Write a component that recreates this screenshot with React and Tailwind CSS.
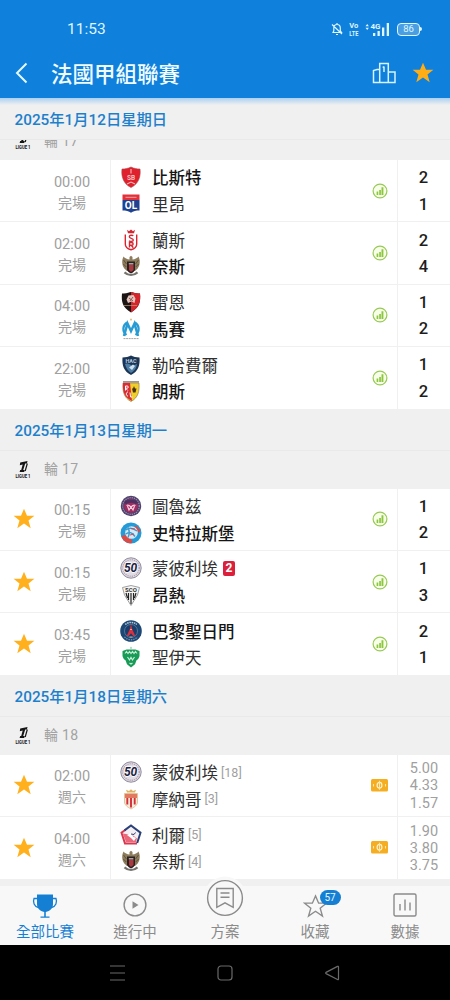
import clsx from 'clsx';

const STAR = 'M12 1.8l3 7h7.4l-5.9 4.8 2.2 7.6-6.7-4.6-6.7 4.6 2.2-7.6L1.6 8.8H9z';

const crests = {
  brest: (
    <>
      <path d="M11 1c3 1.500 6 2 9 2 1 7.500-1.500 15-9 18.500C3.500 18 1 10.500 2 3c3 0 6-.5 9-2z" fill="#e0202c" stroke="#a84448" strokeWidth=".6" />
      <path d="M11 3v4.500M7 18l4-2 4 2" stroke="#f6b9bb" strokeWidth="1.100" fill="none" />
      <text x="11" y="14" fontSize="6.500" fontWeight="700" textAnchor="middle" fill="#f9c4c6">SB</text>
    </>
  ),
  lyon: (
    <>
      <path d="M2.500 1.500h17V7h-17z" fill="#e3313a" />
      <path d="M5.500 4.300h11" stroke="#f5a2a5" />
      <path d="M2.500 7h17v10.500c-3.300 0-6.500.5-8.500 2.200-2-1.700-5.200-2.200-8.500-2.200z" fill="#1f4191" />
      <text x="11" y="16" fontSize="10" fontWeight="700" textAnchor="middle" fill="#fff">OL</text>
    </>
  ),
  reims: (
    <>
      <path d="M7 .8l2 1.400L11 .4l2 1.800L15 .8l-1 3.400H8z" fill="#d92530" />
      <path d="M5.300 5.500v9.500c0 3 2.700 5 5.700 5.800 3-.8 5.700-2.800 5.700-5.800V5.500" fill="#fff" stroke="#d92530" strokeWidth="1.400" />
      <path d="M13.300 6.800c-1-.8-4-.9-4 1 0 1.800 4 1.200 4 3.200 0 1.700-3 1.700-4.300.7M9.500 18.500v-5h2c2.200 0 2.200 2.800 0 2.800h-2M11.300 16.300l2 2.500" fill="none" stroke="#d92530" strokeWidth="1.400" />
    </>
  ),
  nice: (
    <>
      <path d="M9.500 2l1.500-1.200L12.500 2v2.500C15 4.300 17 3.200 18.500 1.500c1.800 3.500 1.800 8.500-.8 12L15 16H7l-2.700-2.500c-2.600-3.500-2.600-8.500-.8-12C5 3.200 7 4.300 9.500 4.500z" fill="#8d7c5c" />
      <path d="M3.500 5l3 4M18.500 5l-3 4M3.300 9l3 3M18.700 9l-3 3" stroke="#5d4e35" strokeWidth=".9" />
      <path d="M7 6.500h8v7.800c0 2-2 3.200-4 4.200-2-1-4-2.200-4-4.200z" fill="#2a2020" />
      <path d="M9 9.500h4.500V15L11 17l-2-2z" fill="#a83a42" />
      <path d="M8.800 8.800h4.600" stroke="#ddd" />
      <path d="M4.500 17.300c4 3.500 9 3.500 13 0" stroke="#77736e" strokeWidth="2.200" fill="none" />
    </>
  ),
  rennes: (
    <>
      <path d="M2 2.500C7 3 9 1 11 1s4 2 9 1.500c.8 8-.5 14-9 19C2.500 16.500 1.200 10.500 2 2.500z" fill="#1c1515" />
      <path d="M11 1c2 0 4 2 9 1.500.8 8-.5 14-9 19z" fill="#d4252c" />
      <path d="M6.500 8.500l2-4 5-.5 2 3.500-1 4.500-3-1.500-3.500 1.500z" fill="#e3c4bc" />
      <path d="M9 7l4 3M13 6l-3 4" stroke="#7a3a3a" strokeWidth=".8" />
      <path d="M4 14.500h13" stroke="#b97" strokeWidth=".7" />
    </>
  ),
  marseille: (
    <>
      <path d="M11 .3l.8 1.300-.8 1.300-.8-1.300z" fill="#cfa65a" />
      <path d="M6.500 17C2 13.500 2.500 7.500 7 4.500M15.500 17c4.500-3.500 4-9.500-.5-12.500" stroke="#279bd3" strokeWidth="2.200" fill="none" />
      <path d="M4 18L7.500 5.500 11 13l3.500-7.500L18 18" stroke="#279bd3" strokeWidth="2.500" fill="none" />
      <path d="M3.500 20.600h15" stroke="#a5a5a5" strokeWidth="1" strokeDasharray="2 .6" />
    </>
  ),
  lehavre: (
    <>
      <path d="M2.500 3.500c3 0 6.500-.7 8.500-2 2 1.300 5.500 2 8.500 2 .7 8-1.500 14-8.500 17.500C4 17.500 1.800 11.500 2.500 3.500z" fill="#1c3554" />
      <path d="M5 10c3-1 5 0 7 2l5-2c-.5 4-2.500 7-6 9-3-2-5-5-6-9z" fill="#4e7ea5" />
      <path d="M9 13.500l4-3 2 1.500-3 4z" fill="#cfe0ee" />
      <text x="11" y="8.500" fontSize="5.500" fontWeight="700" textAnchor="middle" fill="#b8cbe0">HAC</text>
    </>
  ),
  lens: (
    <>
      <path d="M3 3h16c.5 8-.5 14.500-8 18.500C3.500 17.500 2.500 11 3 3z" fill="#f0cf2b" stroke="#8b6b4b" strokeWidth=".6" />
      <path d="M3 3h7l2 18c-8-3.500-9.500-10-9-18z" fill="#d92c35" />
      <path d="M3 1.900h16" stroke="#7e746a" strokeWidth="1.300" />
      <path d="M14 6l1 2.500h1.500l-1 4h-2.500l-1-4h1z" fill="#47330f" />
      <path d="M5.500 10.500V6h1.700c1.500 0 1.500 2.200 0 2.200H5.500l2.300 2.300M8 12c-2.200 0-2.200 4 0 4M10 12.500l.6 4.500h1.800" stroke="#fff" strokeWidth="1" fill="none" />
    </>
  ),
  toulouse: (
    <>
      <circle cx="11" cy="11" r="10.200" fill="#50406b" />
      <circle cx="11" cy="11" r="8.300" fill="none" stroke="#9b8aae" strokeWidth="1.300" strokeDasharray="1.200 1" />
      <circle cx="11" cy="11" r="6.800" fill="#a32a60" />
      <path d="M5 8.200c3-2.500 9-2.500 12 0" stroke="#4b3161" strokeWidth="3" fill="none" />
      <path d="M6.500 10.500c2-1 3 0 4.500 1.500 1.500-1.500 2.500-2.500 4.500-1.500M7.500 11l1.500 4 2-3 2 3 1.500-4" stroke="#f3cfe0" strokeWidth="1.200" fill="none" />
    </>
  ),
  strasbourg: (
    <>
      <circle cx="11" cy="11" r="10.500" fill="#249ad6" />
      <path d="M1.500 14l4-1 7 5.500-1 2.800C6.500 21.500 2.500 18.500 1.500 14zM16 3.500l4.500 5-2.500 2.500-4-5z" fill="#dc4a45" />
      <circle cx="11.500" cy="10.500" r="6.300" fill="#d5eaf6" />
      <path d="M6 8c3-2.500 7-2 11 1M6 12c3-2.500 6-2 9 2.500M8 5.500c1.500 3 1.500 7 0 10" stroke="#3c9ace" strokeWidth="1.500" fill="none" />
      <path d="M11 6.500l4 .5M10 13l4-1" stroke="#d34b50" strokeWidth="1" />
    </>
  ),
  montpellier: (
    <>
      <circle cx="11" cy="11" r="10.200" fill="#dfdce5" stroke="#8f8b9f" strokeWidth="1" />
      <circle cx="11" cy="11" r="8.300" fill="none" stroke="#b9a4ae" strokeWidth="1.400" strokeDasharray="1.200 1" />
      <text x="10.600" y="15.300" fontSize="12" fontWeight="700" fontStyle="italic" textAnchor="middle" fill="#1b2140" stroke="#fff" strokeWidth="1.400" paintOrder="stroke">50</text>
    </>
  ),
  angers: (
    <>
      <path d="M2.500 3.500L11 1.500l8.500 2-2 7.500L11 21.500 4.500 11z" fill="#f7f7f7" stroke="#888" strokeWidth=".8" />
      <path d="M6 9l1.500 5M8.500 9v7M11 9v11M13.500 9v7M16 9l-1.500 5" stroke="#222" strokeWidth="1.200" />
      <text x="11" y="8.200" fontSize="6" fontWeight="700" textAnchor="middle" fill="#333">SCO</text>
    </>
  ),
  psg: (
    <>
      <circle cx="11" cy="11" r="10.800" fill="#1d4774" />
      <circle cx="11" cy="11" r="6.500" fill="#183d6c" stroke="#6f8aa6" strokeWidth=".7" />
      <path d="M11 4l1.300 5.500L15.300 16h-2L11 13.300 8.700 16h-2l3-6.500z" fill="#d8323e" />
      <path d="M9.500 17h3M10 9.500h2" stroke="#e6c9ac" strokeWidth=".8" />
      <path d="M5.200 4.500C8.500 1.700 13.500 1.700 16.800 4.500" stroke="#b9c9d8" strokeWidth="1.500" strokeDasharray="1.600 .7" fill="none" />
      <path d="M4.500 16.800c3.500 4 9.500 4 13 0" stroke="#7f9bb5" strokeWidth="1.200" strokeDasharray="1.400 1" fill="none" />
    </>
  ),
  saintetienne: (
    <>
      <path d="M11 .4l1 2.200h-2z" fill="#6fb791" />
      <path d="M2.500 5l4-1.500h9l4 1.500v5c-.5 2-1.200 3.200-3 4.200l-1.500 4-4 3.300-4-3.300-1.500-4c-1.800-1-2.500-2.200-3-4.200z" fill="#189b57" />
      <path d="M5 7.500l1.500-2L8 7.500l1.500-2 1.500 2 1.500-2 1.500 2 1.500-2L17 7.500" stroke="#c3e8d1" strokeWidth="1.100" fill="none" />
      <path d="M7.500 11l2 3 1.500-2.500 1.500 2.500 2-3M9.500 17l1.500 1 1.500-1" stroke="#c9eed8" strokeWidth="1.200" fill="none" />
    </>
  ),
  monaco: (
    <>
      <path d="M7 4.500L6 1.800l3 1.200 2-1.700L13 3l3-1.200-1 2.700z" fill="#dfb266" />
      <path d="M4.500 5.500h13V14c0 3-3 5-6.500 7-3.500-2-6.500-4-6.500-7z" fill="#f6eadd" stroke="#ddb680" strokeWidth=".8" />
      <path d="M5 6h12v4H5z" fill="#e27a62" />
      <path d="M7.300 10v6.500M11 10v9.500M14.700 10v6.500" stroke="#d72e35" strokeWidth="1.900" />
    </>
  ),
  lille: (
    <>
      <path d="M11 1.500l9.500 7.200L17 19.500H5L1.500 8.700z" fill="#f3eff3" />
      <path d="M2.800 9.500L6 18h10l1-3.500-4-3-4-1z" fill="#e9697a" />
      <path d="M7 11l4-2 2 3.500 3 1.500-2 3-3-3z" fill="#fff" />
      <path d="M5.500 5.800L1.500 8.700 5 19.500h12" fill="none" stroke="#dd3750" strokeWidth="2" />
      <path d="M4.500 6.400L11 1.500l9.500 7.200L17.200 19" fill="none" stroke="#2c4078" strokeWidth="2" />
      <path d="M11 10l3 .5 1.500-2" fill="none" stroke="#2c4078" strokeWidth="1" />
    </>
  ),
};

const sections = [
  {
    date: '2025年1月12日星期日',
    round: '輪 17',
    clipped: true,
    matches: [
      { time: '00:00', status: '完場', home: { n: '比斯特', c: 'brest', win: true }, away: { n: '里昂', c: 'lyon' }, score: [2, 1] },
      { time: '02:00', status: '完場', home: { n: '蘭斯', c: 'reims' }, away: { n: '奈斯', c: 'nice', win: true }, score: [2, 4] },
      { time: '04:00', status: '完場', home: { n: '雷恩', c: 'rennes' }, away: { n: '馬賽', c: 'marseille', win: true }, score: [1, 2] },
      { time: '22:00', status: '完場', home: { n: '勒哈費爾', c: 'lehavre' }, away: { n: '朗斯', c: 'lens', win: true }, score: [1, 2] },
    ],
  },
  {
    date: '2025年1月13日星期一',
    round: '輪 17',
    matches: [
      { fav: true, time: '00:15', status: '完場', home: { n: '圖魯茲', c: 'toulouse' }, away: { n: '史特拉斯堡', c: 'strasbourg', win: true }, score: [1, 2] },
      { fav: true, time: '00:15', status: '完場', home: { n: '蒙彼利埃', c: 'montpellier', red: 2 }, away: { n: '昂熱', c: 'angers', win: true }, score: [1, 3] },
      { fav: true, time: '03:45', status: '完場', home: { n: '巴黎聖日門', c: 'psg', win: true }, away: { n: '聖伊天', c: 'saintetienne' }, score: [2, 1] },
    ],
  },
  {
    date: '2025年1月18日星期六',
    round: '輪 18',
    matches: [
      { fav: true, time: '02:00', status: '週六', home: { n: '蒙彼利埃', c: 'montpellier', rank: 18 }, away: { n: '摩納哥', c: 'monaco', rank: 3 }, odds: ['5.00', '4.33', '1.57'] },
      { fav: true, time: '04:00', status: '週六', home: { n: '利爾', c: 'lille', rank: 5 }, away: { n: '奈斯', c: 'nice', rank: 4 }, odds: ['1.90', '3.80', '3.75'] },
    ],
  },
];

function StatusBar() {
  return (
    <div className="flex h-[58px] items-center pl-[67px] pr-[28px] text-[#dff6ff]">
      <span className="mt-px text-[15.500px]">11:53</span>
      <div className="ml-auto flex items-center">
        <svg width="12" height="14" viewBox="0 0 12 14" fill="none" stroke="currentColor" strokeWidth="1.2">
          <path d="M2 10.500h8.500L9.300 8.800V6C9.300 3.800 8 2.500 6 2.500S2.800 3.800 2.800 6v2.800zM5 12.500h2M6 1v1.500M1 2.500l10 9.500" />
        </svg>
        <svg className="ml-[6px]" width="10" height="14" viewBox="0 0 10 14" fill="currentColor" fontSize="8" fontWeight="700">
          <text x=".3" y="6.200" textLength="9" lengthAdjust="spacingAndGlyphs">Vo</text>
          <text x=".3" y="13.500" textLength="9" lengthAdjust="spacingAndGlyphs">LTE</text>
        </svg>
        <svg className="ml-[6px]" width="25" height="15" viewBox="0 0 25 15" fill="currentColor">
          <path d="M.5 4.200L2.200 2l1.700 2.200zM.5 5.800L2.200 8l1.700-2.200zM8 11h2.300v3H8zM12.500 9h2.300v5h-2.300zM17 5.500h2.300V14H17zM21.700 1H24v13h-2.300z" />
          <text x="5.500" y="7.200" fontSize="8" fontWeight="700">4G</text>
        </svg>
        <div className="ml-[7px] flex h-[13px] w-[23px] items-center justify-center rounded-[4px] border-[1.500px] border-current bg-[#4a9fe3] text-[9.500px] leading-none">
          86
        </div>
        <div className="h-[4px] w-[2px] rounded-r bg-current" />
      </div>
    </div>
  );
}

function Header() {
  return (
    <header className="h-[98px] shrink-0 bg-[#0f80dc]">
      <StatusBar />
      <div className="flex h-[30px] items-center pl-[15px] pr-[16px]">
        <svg width="14" height="22" viewBox="0 0 14 22" fill="none" stroke="#e4f8ff" strokeWidth="2">
          <path d="M11.500 1.500L2 11l9.500 9.500" />
        </svg>
        <h1 className="ml-[22px] pt-[3px] text-[21.500px] font-medium leading-[30px] text-[#f0fcff]">法國甲組聯賽</h1>
        <svg className="ml-auto" width="26" height="22" viewBox="0 0 26 22" fill="none" stroke="#d6f3ff" strokeWidth="1.5">
          <path d="M8.700 20.500V1.500h8.600v19M8.700 7.500H6L2.500 8.500v12h21.500V10h-6.700M13 4.500v5.500M11.700 5.500l1.300-1" />
        </svg>
        <svg className="ml-[15px]" width="22" height="22" viewBox="1 1 22 22" fill="#ffad14">
          <path d={STAR} />
        </svg>
      </div>
    </header>
  );
}

function RoundRow({ label }) {
  return (
    <div className="flex h-[38px] shrink-0 items-center pl-[15px]">
      <svg width="16" height="18" viewBox="0 0 16 18" fill="#151515">
        <path d="M5.200 1.500L12.500 0l-.6 2.500h-1.700L8.200 9h1.600l-.6 2H4.600l.6-2h1l1.500-5.500-2.900.7z" />
        <path d="M12.300 2.500L10.200 10" stroke="#151515" strokeWidth="1.200" fill="none" />
        <text x=".5" y="17" fontSize="5.500" fontWeight="700" textLength="15" lengthAdjust="spacingAndGlyphs">LIGUE 1</text>
      </svg>
      <span className="ml-[13px] text-[14px] tracking-[0.3px] text-[#a2a2a2]">{label}</span>
    </div>
  );
}

function Team({ team }) {
  return (
    <div className="flex h-[26.500px] items-center">
      <svg className="shrink-0" width="22" height="22" viewBox="0 0 22 22">
        {crests[team.c]}
      </svg>
      <span
        className={clsx(
          'ml-[10px] whitespace-nowrap pt-[4px] text-[16.500px] leading-[26px]',
          team.win ? 'font-medium text-[#151515]' : 'font-normal text-[#303030]',
        )}
      >
        {team.n}
      </span>
      {team.red && (
        <span className="ml-[5px] flex h-[15px] w-[12px] items-center justify-center rounded-[2px] bg-[#dc1f3a] text-[12px] font-bold text-white">
          {team.red}
        </span>
      )}
      {team.rank && <span className="ml-[3px] pt-[2px] text-[12.500px] text-[#a0a0a0]">[{team.rank}]</span>}
    </div>
  );
}

function StatsIcon() {
  return (
    <svg width="16" height="16" viewBox="0 0 16 16">
      <circle cx="8" cy="8" r="6.900" fill="#f7ffe9" stroke="#98c956" strokeWidth="1.200" />
      <path d="M4.600 8.500h1.700V12H4.600zM7.200 7h1.700v5H7.200zM9.500 4.300h1.900V12H9.500z" fill="#8cc63f" />
    </svg>
  );
}

function OddsIcon() {
  return (
    <svg width="17" height="13" viewBox="0 0 17 13">
      <rect width="17" height="12.500" rx="1.500" fill="#f5ad22" />
      <ellipse cx="8.500" cy="6.200" rx="2.400" ry="2.800" fill="none" stroke="#fff3d0" strokeWidth="1.200" />
      <path d="M8.500 1.800v8.900M2.500 5v2.500M14.500 5v2.500" stroke="#ffe7a8" strokeWidth="1.100" />
    </svg>
  );
}

function Match({ match }) {
  return (
    <div className="flex h-[62.400px] shrink-0 border-b border-[#f0f0f0] bg-white">
      <div className="flex w-[48px] items-center justify-center">
        {match.fav && (
          <svg width="22" height="22" viewBox="1 1 22 22" fill="#ffb01c">
            <path d={STAR} />
          </svg>
        )}
      </div>
      <div className="flex w-[63px] flex-col items-center justify-center border-r border-[#f0f0f0] pr-[14px] pt-[4px] text-[14.500px] leading-[20px] text-[#a0a0a0]">
        <span>{match.time}</span>
        <span className="text-[14px]">{match.status}</span>
      </div>
      <div className="flex flex-1 flex-col justify-center pl-[9px]">
        <Team team={match.home} />
        <Team team={match.away} />
      </div>
      <div className="flex w-[35px] items-center justify-center">{match.odds ? <OddsIcon /> : <StatsIcon />}</div>
      {match.odds ? (
        <div className="flex w-[53px] flex-col items-center justify-center border-l border-[#f0f0f0] pt-px text-[14.500px] leading-[17.200px] text-[#a0a0a0]">
          {match.odds.map((o) => (
            <span key={o}>{o}</span>
          ))}
        </div>
      ) : (
        <div className="flex w-[53px] flex-col items-center justify-center border-l border-[#f0f0f0] pr-px pt-[2px] text-[16.500px] font-medium leading-[26.500px] text-[#1d1d1d]">
          <span>{match.score[0]}</span>
          <span>{match.score[1]}</span>
        </div>
      )}
    </div>
  );
}

function Section({ section }) {
  return (
    <section>
      <h2
        className={clsx(
          'flex items-center border-b border-[#e9e9e9] pl-[14.500px] pt-[3px] text-[15.300px] font-medium text-[#1c80cc]',
          section.clipped ? 'h-[42px]' : 'h-[41px]',
        )}
      >
        {section.date}
      </h2>
      <div className={clsx('flex flex-col justify-end overflow-hidden', section.clipped ? 'h-[20px]' : 'h-[38px]')}>
        <RoundRow label={section.round} />
      </div>
      {section.matches.map((m) => (
        <Match key={m.home.n} match={m} />
      ))}
    </section>
  );
}

function Tab({ label, active, children }) {
  return (
    <div className={clsx('flex flex-1 flex-col items-center', active ? 'text-[#1580d3]' : 'text-[#8b8b8b]')}>
      <div className="flex h-[34px] items-end justify-center">{children}</div>
      <span className="mt-[2px] text-[14.500px] leading-[22px]">{label}</span>
    </div>
  );
}

function TabBar() {
  return (
    <nav className="flex h-[59px] shrink-0 bg-[#f8f8f8]">
      <Tab label="全部比賽" active>
        <svg className="mb-px" width="26" height="26" viewBox="0 0 26 26" fill="currentColor">
          <path d="M5 1.500h16V11c0 4.500-3 7-7.200 8v4.400h3.700v1.400h-9v-1.400h3.700V19C8 18 5 15.500 5 11z" />
          <path d="M5 5.500H2C.7 9 2 13.500 6.500 14.500M21 5.500h3C25.300 9 24 13.500 19.500 14.500" fill="none" stroke="currentColor" strokeWidth="1.300" />
        </svg>
      </Tab>
      <Tab label="進行中">
        <svg className="mb-[3px]" width="24" height="24" viewBox="0 0 24 24">
          <circle cx="12" cy="12" r="10.900" fill="none" stroke="currentColor" strokeWidth="1.400" />
          <path d="M9.500 8.200l6 3.800-6 3.800z" fill="currentColor" />
        </svg>
      </Tab>
      <Tab label="方案">
        <svg className="relative z-10 shrink-0" width="44" height="44" viewBox="0 0 44 44" fill="none" stroke="currentColor" strokeWidth="1.400">
          <circle cx="22" cy="22" r="21.500" fill="#f8f8f8" stroke="none" />
          <circle cx="22" cy="22" r="17.400" />
          <path d="M13.800 12.500h16.400v18.800L22 26.800l-8.200 4.500zM17.500 17h9M17.500 21.300h9" />
        </svg>
      </Tab>
      <Tab label="收藏">
        <div className="relative mb-px">
          <svg width="25" height="25" viewBox="0 0 24 24" fill="none" stroke="currentColor" strokeWidth="1.300">
            <path d={STAR} />
          </svg>
          <span className="absolute -top-[4px] left-[17px] flex h-[15px] w-[21px] items-center justify-center rounded-full bg-[#1580d3] text-[10px] text-[#e5f6ff]">
            57
          </span>
        </div>
      </Tab>
      <Tab label="數據">
        <svg className="mb-[3px]" width="24" height="24" viewBox="0 0 24 24" fill="none" stroke="currentColor" strokeWidth="1.400">
          <rect x="1" y="1" width="22" height="22" rx="1.500" />
          <path d="M7 11v6.500M12 6.500v11M17 9.500v8" />
        </svg>
      </Tab>
    </nav>
  );
}

function SystemNav() {
  return (
    <div className="flex h-[55px] shrink-0 items-center bg-black pl-[109px]">
      <svg width="17" height="16" viewBox="0 0 17 16" fill="none" stroke="#6a6a6a" strokeWidth="1.200">
        <path d="M1 1h15M1 8h15M1 15h15" />
      </svg>
      <svg className="ml-[91px]" width="16" height="16" viewBox="0 0 16 16" fill="none" stroke="#6a6a6a" strokeWidth="1.200">
        <rect x="1" y="1" width="14" height="14" rx="3" />
      </svg>
      <svg className="ml-[91px]" width="16" height="16" viewBox="0 0 16 16" fill="none" stroke="#6a6a6a" strokeWidth="1.200">
        <path d="M14.500 2v12q0 1-1 .5L2 8.600q-.8-.6 0-1.200l11.500-6q1-.4 1 .6z" strokeLinejoin="round" />
      </svg>
    </div>
  );
}

export default function App() {
  return (
    <div
      lang="zh-Hant"
      className="flex h-[1000px] w-[450px] flex-col overflow-hidden bg-[#f0f0f0] font-['Roboto','Noto_Sans_CJK_TC',sans-serif]"
    >
      <Header />
      <main className="h-[788px] shrink-0 bg-[linear-gradient(#a9d0f2,#f0f0f0_7px)]">
        {sections.map((s) => (
          <Section key={s.date} section={s} />
        ))}
      </main>
      <TabBar />
      <SystemNav />
    </div>
  );
}
